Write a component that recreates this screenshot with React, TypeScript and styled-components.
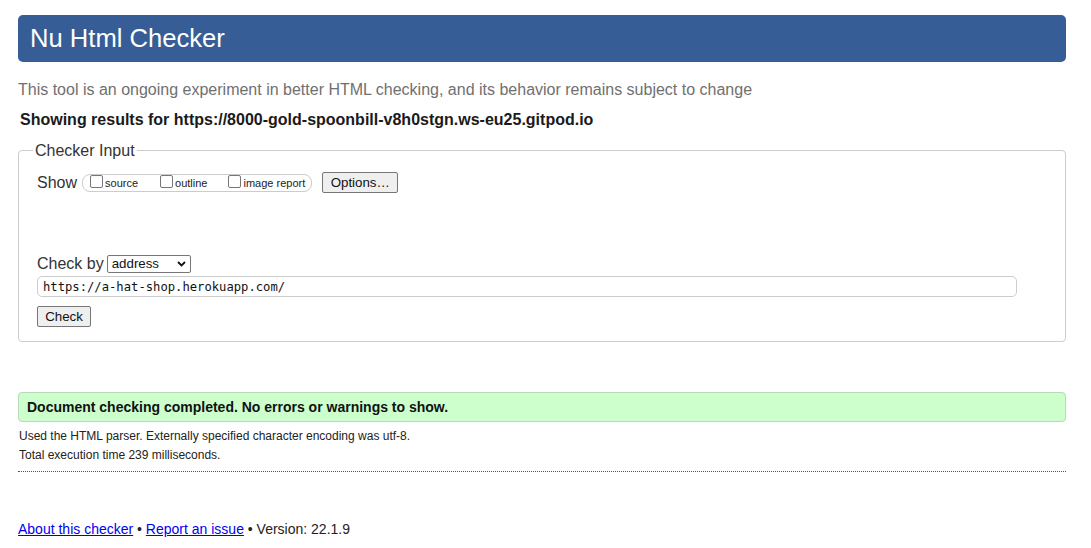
import React from "react";
import styled, { createGlobalStyle } from "styled-components";

const Global = createGlobalStyle`
  html, body { margin: 0; padding: 0; background: #fff; }
  body { font-family: "Liberation Sans", Arial, sans-serif; color: #222; }
`;

const Page = styled.div`
  display: flex;
  flex-direction: column;
  width: 1048px;
  margin: 0 0 0 18px;
  padding-top: 15px;
`;

const Header = styled.h1`
  margin: 0;
  height: 47px;
  display: flex;
  align-items: center;
  padding-left: 12px;
  background: #365d95;
  border-radius: 5px;
  color: #fff;
  font-size: 25.6px;
  font-weight: normal;
`;

const Intro = styled.p`
  margin: 18px 0 0;
  font-size: 16px;
  line-height: 19px;
  color: #707070;
`;

const Showing = styled.p`
  margin: 11px 0 0 2px;
  font-size: 16px;
  line-height: 19px;
  font-weight: bold;
  color: #1a1a1a;
`;

const Fieldset = styled.fieldset`
  margin: 12px 0 0;
  padding: 12px 14px 14px 14px;
  border: 1px solid #cccccc;
  border-radius: 4px;
  min-width: 0;
`;

const Legend = styled.legend`
  padding: 0 2px;
  font-size: 16px;
  line-height: 19px;
  color: #333;
`;

const Inner = styled.div`
  display: flex;
  flex-direction: column;
  padding-left: 4px;
`;

const Row = styled.div<{ $mt?: number }>`
  display: flex;
  align-items: center;
  margin-top: ${(p) => p.$mt ?? 0}px;
`;

const Label = styled.span`
  font-size: 16px;
  line-height: 19px;
  color: #333;
  margin-right: 3px;
`;

const Group = styled.div`
  display: flex;
  align-items: center;
  height: 16px;
  border: 1px solid #cccccc;
  border-radius: 8px;
  padding: 0 6px 0 7px;
  margin-left: 2px;
`;

const CheckItem = styled.label<{ $gap?: number }>`
  display: flex;
  align-items: center;
  font-size: 11px;
  color: #222;
  margin-right: ${(p) => p.$gap ?? 0}px;
`;

const Box = styled.span`
  display: inline-block;
  width: 11px;
  height: 11px;
  border: 1px solid #767676;
  border-radius: 2px;
  background: #fff;
  margin-right: 2px;
  margin-top: -2px;
`;

const Button = styled.button<{ $w: number; $h: number; $ml?: number }>`
  box-sizing: border-box;
  width: ${(p) => p.$w}px;
  height: ${(p) => p.$h}px;
  margin-left: ${(p) => p.$ml ?? 0}px;
  padding: 0;
  font-family: "Liberation Sans", Arial, sans-serif;
  font-size: 13.3px;
  color: #111;
  background: #efefef;
  border: 1px solid #767676;
  border-radius: 2px;
`;

const Select = styled.div`
  box-sizing: border-box;
  width: 84px;
  height: 18px;
  display: flex;
  align-items: center;
  justify-content: space-between;
  padding: 0 4px 0 4px;
  border: 1px solid #767676;
  border-radius: 2px;
  font-size: 13.3px;
  color: #111;
`;

const UrlInput = styled.div`
  box-sizing: border-box;
  width: 980px;
  height: 21px;
  margin-top: 3px;
  display: flex;
  align-items: center;
  padding-left: 5px;
  border: 1px solid #cccccc;
  border-radius: 5px;
  font-family: "DejaVu Sans Mono", "Liberation Mono", monospace;
  font-size: 12.2px;
  color: #111;
`;

const Success = styled.div`
  box-sizing: border-box;
  margin-top: 50px;
  height: 30px;
  display: flex;
  align-items: center;
  padding-left: 8px;
  background: #ccffcc;
  border: 1px solid #b8d8b8;
  border-radius: 4px;
  font-size: 14px;
  font-weight: bold;
  color: #111;
`;

const Details = styled.div`
  margin-top: 5px;
  padding-bottom: 6px;
  border-bottom: 1px dotted #555;
`;

const Small = styled.p`
  margin: 0 0 0 1px;
  font-size: 12px;
  line-height: 19px;
  color: #222;
`;

const Footer = styled.p`
  margin: 49px 0 0;
  font-size: 14px;
  line-height: 17px;
  color: #222;
`;

const Link = styled.a`
  color: #0000ee;
  text-decoration: underline;
`;

const Chevron = () => (
  <svg width="9" height="6" viewBox="0 0 9 6">
    <path d="M1 1 L4.5 4.5 L8 1" fill="none" stroke="#111" strokeWidth="1.8" />
  </svg>
);

export default function App() {
  return (
    <>
      <Global />
      <Page>
        <Header>Nu Html Checker</Header>
        <Intro>
          This tool is an ongoing experiment in better HTML checking, and its behavior remains subject to change
        </Intro>
        <Showing>Showing results for https://8000-gold-spoonbill-v8h0stgn.ws-eu25.gitpod.io</Showing>
        <Fieldset>
          <Legend>Checker Input</Legend>
          <Inner>
            <Row>
              <Label>Show</Label>
              <Group>
                <CheckItem $gap={22}>
                  <Box />
                  source
                </CheckItem>
                <CheckItem $gap={21}>
                  <Box />
                  outline
                </CheckItem>
                <CheckItem>
                  <Box />
                  image report
                </CheckItem>
              </Group>
              <Button $w={76} $h={21} $ml={10}>
                Options…
              </Button>
            </Row>
            <Row $mt={61}>
              <Label>Check by</Label>
              <Select>
                <span>address</span>
                <Chevron />
              </Select>
            </Row>
            <UrlInput>https://a-hat-shop.herokuapp.com/</UrlInput>
            <Row $mt={9}>
              <Button $w={54} $h={21}>Check</Button>
            </Row>
          </Inner>
        </Fieldset>
        <Success>Document checking completed. No errors or warnings to show.</Success>
        <Details>
          <Small>Used the HTML parser. Externally specified character encoding was utf-8.</Small>
          <Small>Total execution time 239 milliseconds.</Small>
        </Details>
        <Footer>
          <Link href="#">About this checker</Link> • <Link href="#">Report an issue</Link> • Version: 22.1.9
        </Footer>
      </Page>
    </>
  );
}
